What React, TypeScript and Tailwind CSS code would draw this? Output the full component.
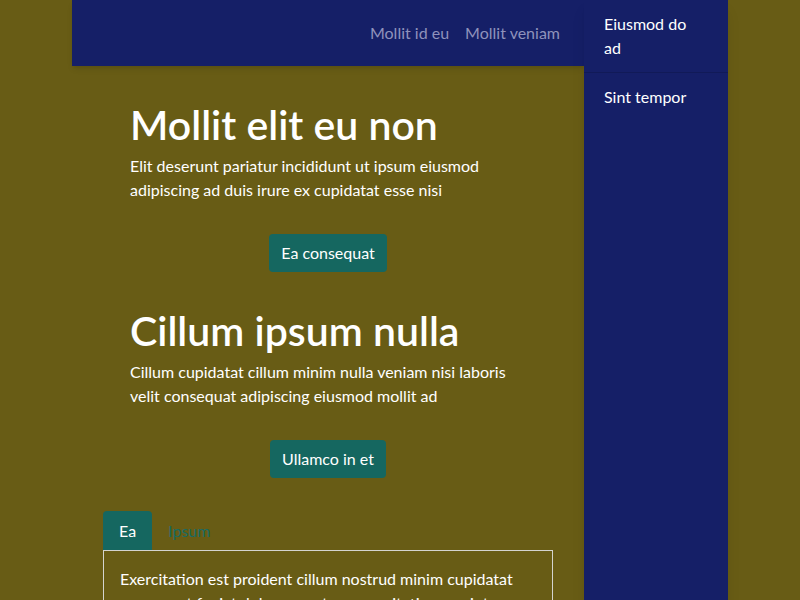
import { useState } from 'react'

const sections = [
  {
    title: 'Mollit elit eu non',
    body: 'Elit deserunt pariatur incididunt ut ipsum eiusmod adipiscing ad duis irure ex cupidatat esse nisi',
    action: 'Ea consequat',
  },
  {
    title: 'Cillum ipsum nulla',
    body: 'Cillum cupidatat cillum minim nulla veniam nisi laboris velit consequat adipiscing eiusmod mollit ad',
    action: 'Ullamco in et',
  },
]

const tabs = [
  { id: 'ea', label: 'Ea', text: 'Exercitation est proident cillum nostrud minim cupidatat consequat fugiat dolor excepteur exercitation eu sint veniam' },
  { id: 'ipsum', label: 'Ipsum', text: 'Ipsum magna laboris aliqua nostrud dolore' },
]

export default function App() {
  const [activeTab, setActiveTab] = useState('ea')
  const current = tabs.find((t) => t.id === activeTab) ?? tabs[0]

  return (
    <div className="min-h-screen bg-[#685c15] font-['Lato',sans-serif] text-white">
      <div className="mx-auto flex min-h-screen w-[656px]">
        {/* Main column */}
        <div className="flex-1">
          <header className="flex h-[66px] items-center justify-end gap-4 bg-[#151f67] pr-6 shadow-md">
            <a className="text-base text-[#8f92bb]" href="#">Mollit id eu</a>
            <a className="text-base text-[#8f92bb]" href="#">Mollit veniam</a>
          </header>

          {sections.map((s) => (
            <section key={s.title} className="mx-auto mt-[35px] w-[396px]">
              <h1 className="text-[41px] font-semibold leading-[48px]">{s.title}</h1>
              <p className="mt-[5px] text-base leading-6">{s.body}</p>
              <div className="mt-8 flex justify-center">
                <button className="h-[38px] rounded bg-[#156760] px-3 text-base">{s.action}</button>
              </div>
            </section>
          ))}

          {/* Tabs */}
          <div className="mx-auto mt-[33px] w-[450px]">
            <div className="flex">
              {tabs.map((t) => (
                <button
                  key={t.id}
                  onClick={() => setActiveTab(t.id)}
                  className={
                    t.id === activeTab
                      ? 'h-[39px] rounded-t bg-[#156760] px-4 text-base text-white'
                      : 'h-[39px] px-4 text-base text-[#186b63]'
                  }
                >
                  {t.label}
                </button>
              ))}
            </div>
            <div className="border border-[#d4d4cf] p-4 text-base leading-6">{current.text}</div>
          </div>
        </div>

        {/* Sidebar */}
        <aside className="w-[144px] bg-[#151f67] shadow-lg">
          <div className="border-b border-[#111a58] py-3 pl-5 pr-6 text-base leading-6">Eiusmod do ad</div>
          <div className="py-3 pl-5 pr-6 text-base leading-6">Sint tempor</div>
        </aside>
      </div>
    </div>
  )
}
